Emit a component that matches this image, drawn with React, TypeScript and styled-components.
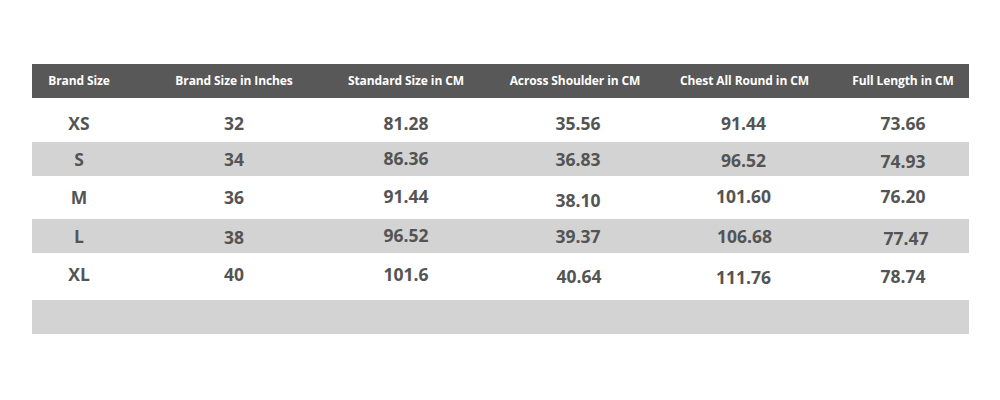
import React from "react";
import styled, { createGlobalStyle } from "styled-components";

const GlobalStyle = createGlobalStyle`
  html, body { margin: 0; padding: 0; background: #ffffff; }
  body { font-family: "Open Sans", "Liberation Sans", sans-serif; }
`;

const Page = styled.div`
  width: 1000px;
  height: 400px;
  padding: 64px 0 0 32px;
  box-sizing: border-box;
`;

const Table = styled.div`
  width: 937px;
  display: flex;
  flex-direction: column;
`;

const COLS = "94px 216px 128px 210px 127px 162px";

const HeaderRow = styled.div`
  display: grid;
  grid-template-columns: ${COLS};
  height: 34px;
  align-items: center;
  background: #585858;
`;

const HeadCell = styled.div<{ $pl?: number }>`
  text-align: center;
  padding-left: ${(p) => p.$pl ?? 0}px;
  color: #ffffff;
  font-size: 12px;
  font-weight: 700;
  letter-spacing: -0.1px;
  white-space: nowrap;
  transform: translateY(-1px);
`;

const Row = styled.div<{ $shade: boolean; $h: number }>`
  display: grid;
  grid-template-columns: ${COLS};
  height: ${(p) => p.$h}px;
  align-items: center;
  background: ${(p) => (p.$shade ? "#d3d3d3" : "#ffffff")};
`;

const Cell = styled.div<{ $pl?: number; $dy?: number; $dx?: number }>`
  text-align: center;
  padding-left: ${(p) => p.$pl ?? 0}px;
  color: #545454;
  font-size: 17.5px;
  font-weight: 700;
  white-space: nowrap;
  transform: translate(${(p) => p.$dx ?? 0}px, ${(p) => p.$dy ?? 0}px);
`;

const headers = [
  "Brand Size",
  "Brand Size in Inches",
  "Standard Size in CM",
  "Across Shoulder in CM",
  "Chest All Round in CM",
  "Full Length in CM",
];

type Val = { t: string; dy?: number; dx?: number };

const rows: { h: number; shade: boolean; vals: Val[] }[] = [
  {
    h: 44,
    shade: false,
    vals: [{ t: "XS", dy: 3 }, { t: "32", dy: 3 }, { t: "81.28", dy: 3 }, { t: "35.56", dx: 3, dy: 3 }, { t: "91.44", dy: 3 }, { t: "73.66", dy: 3 }],
  },
  {
    h: 34,
    shade: true,
    vals: [{ t: "S" }, { t: "34" }, { t: "86.36", dy: -1 }, { t: "36.83", dx: 3 }, { t: "96.52", dy: 1 }, { t: "74.93", dy: 2 }],
  },
  {
    h: 43,
    shade: false,
    vals: [{ t: "M", dy: -1 }, { t: "36", dy: -1 }, { t: "91.44", dy: -2 }, { t: "38.10", dx: 3, dy: 2 }, { t: "101.60", dy: -2 }, { t: "76.20", dy: -2 }],
  },
  {
    h: 34,
    shade: true,
    vals: [{ t: "L" }, { t: "38", dy: 1 }, { t: "96.52", dy: -1 }, { t: "39.37", dx: 3 }, { t: "106.68", dx: 1 }, { t: "77.47", dx: 3, dy: 2 }],
  },
  {
    h: 47,
    shade: false,
    vals: [{ t: "XL", dy: -3 }, { t: "40", dy: -3 }, { t: "101.6", dy: -3 }, { t: "40.64", dx: 4, dy: -1 }, { t: "111.76", dy: 0 }, { t: "78.74", dy: -1 }],
  },
  { h: 34, shade: true, vals: [] },
];

export default function App() {
  return (
    <>
      <GlobalStyle />
      <Page>
        <Table>
          <HeaderRow>
            {headers.map((h, i) => (
              <HeadCell key={h} $pl={i === 5 ? 30 : 0}>
                {h}
              </HeadCell>
            ))}
          </HeaderRow>
          {rows.map((r, ri) => (
            <Row key={ri} $shade={r.shade} $h={r.h}>
              {r.vals.map((v, i) => (
                <Cell key={i} $pl={i === 5 ? 30 : 0} $dx={v.dx} $dy={v.dy}>
                  {v.t}
                </Cell>
              ))}
            </Row>
          ))}
        </Table>
      </Page>
    </>
  );
}
